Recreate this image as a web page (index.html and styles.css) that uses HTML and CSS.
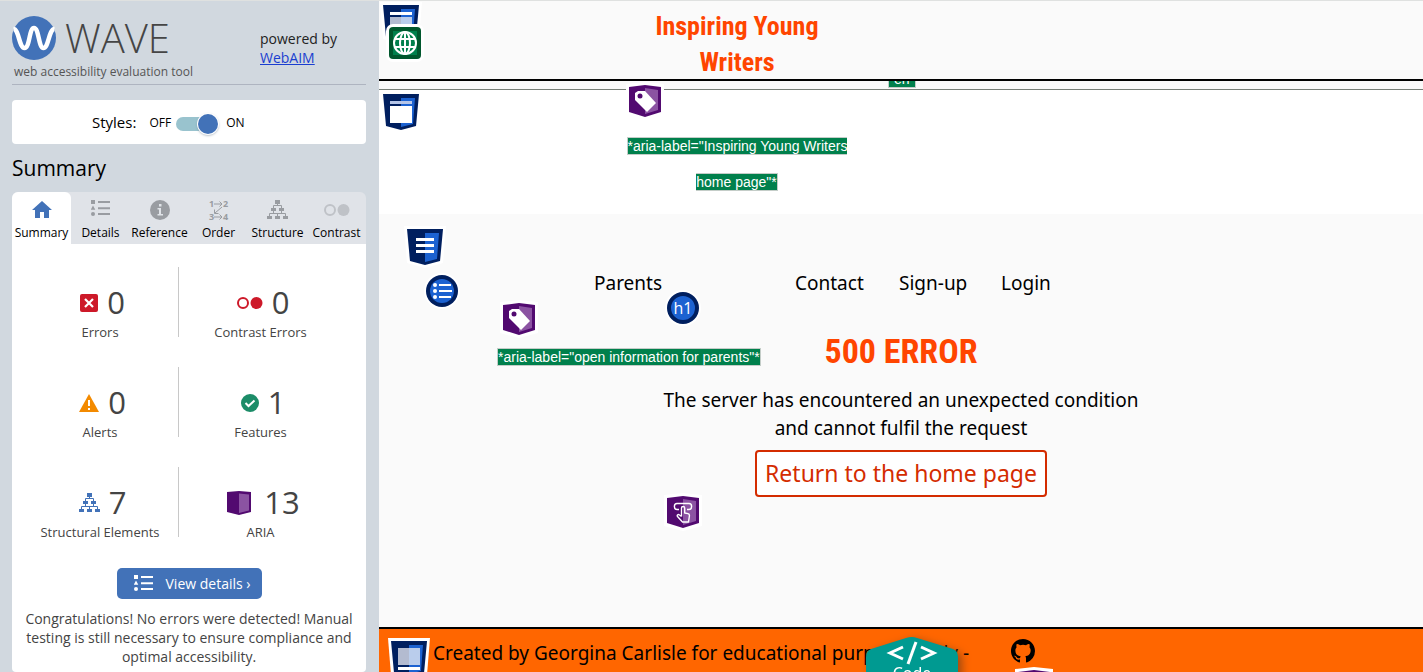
FILE: index.html
```html
<!DOCTYPE html>
<html lang="en">
<head>
<meta charset="utf-8">
<title>500 Error - Inspiring Young Writers</title>
<link rel="stylesheet" href="styles.css">
</head>
<body>
<svg class="defs" aria-hidden="true">
  <symbol id="list" viewBox="0 0 19 17"><path d="M0 0h4v4H0zM2 5.5l2.3 4.2H-.3zM7 1h12v2H7zM7 7.3h12v2H7zM7 13h12v2H7z"/><circle cx="2" cy="14" r="2"/></symbol>
  <symbol id="tree" viewBox="0 0 21 19"><path d="M8 0h5v4H8zM4 8h5v3H4zM12 8h5v3h-5zM0 16h5v3H0zM8 16h5v3H8zM16 16h5v3h-5z"/><path d="M10.500 3v3M6.500 8V5.500h8V8M6.500 11v2.500M14.500 11v2.500M2.500 16v-2.500h16V16M10.500 13v3" fill="none" stroke="currentColor"/></symbol>
  <symbol id="circles" viewBox="0 0 26 12"><circle cx="6" cy="6" r="5" fill="none" stroke="currentColor" stroke-width="2"/><circle cx="19.500" cy="6" r="6"/></symbol>
  <symbol id="shield" viewBox="0 0 42 42"><path fill="#fff" d="M0 0h42l-3 37-18 5-18-5z"/><path fill="#001f5f" d="M3 3h36l-3 32-15 4-15-4z"/><path fill="#1c62d1" d="M21 7h14l-2 26-12 3z"/></symbol>
  <symbol id="cube" viewBox="0 0 38 38"><path fill="#fff" d="M0 2l19-2 19 2v31l-19 5-19-5z"/><path fill="#520a70" d="M3 5l16-2 16 2v25l-16 5-16-5z"/><path fill="#8b53a2" d="M19 6l13 2v20l-13 4z"/></symbol>
</svg>
<div class="app">
  <aside class="sidebar">
    <header class="brand">
      <div class="brand-main">
        <div class="logo">
          <svg width="44" height="44" viewBox="0 0 44 44" aria-hidden="true"><circle cx="22" cy="22" r="22" fill="#4272b8"/><path d="M1.500 13C7 13 7 32 12.500 32S17 12 22 12s4.500 20 9.500 20S37 13 42.500 13" fill="none" stroke="#fff" stroke-width="4.500"/></svg>
          <span class="logo-text">WAVE</span>
        </div>
        <p class="tagline">web accessibility evaluation tool</p>
      </div>
      <p class="powered">powered by<br><a href="#webaim">WebAIM</a></p>
    </header>
    <div class="styles-box">
      <span class="styles-label" id="styles-label">Styles:</span>
      <span>OFF</span><input class="switch" type="checkbox" checked aria-labelledby="styles-label"><span>ON</span>
    </div>
    <h2 class="side-title">Summary</h2>
    <div class="tabs" role="tablist">
      <button class="tab active" role="tab" aria-selected="true"><svg width="20" height="20" viewBox="0 0 20 20"><path d="M10 1l10 9h-3v8h-5v-6H8v6H3v-8H0z"/></svg>Summary</button>
      <button class="tab" role="tab"><svg width="19" height="20"><use href="#list" width="19" height="17"/></svg>Details</button>
      <button class="tab" role="tab"><svg width="20" height="20" viewBox="0 0 20 20"><circle cx="10" cy="10" r="10"/><path fill="#e0e3e8" d="M9 4h2.500v2.500H9zM7.500 8H11v6h2v1.500H7.500V14H9V9.500H7.500z"/></svg>Reference</button>
      <button class="tab" role="tab"><svg class="order" width="20" height="20" viewBox="0 0 20 20"><g class="order-text"><text x="0" y="7">1</text><text x="14" y="7">2</text><text x="0" y="20">3</text><text x="14" y="20">4</text></g><path d="M5 4h8M10.500 1.500L13 4l-2.500 2.500M5 17h8M10.500 14.500L13 17l-2.500 2.500M13 7l-7 6M5.500 9.500L5.500 13.500H9.500" fill="none" stroke="currentColor"/></svg>Order</button>
      <button class="tab" role="tab"><svg width="21" height="20"><use href="#tree" width="21" height="19"/></svg>Structure</button>
      <button class="tab pale" role="tab"><svg width="26" height="20"><use href="#circles" y="4" width="26" height="12"/></svg>Contrast</button>
    </div>
    <section class="panel">
      <ul class="stats">
        <li><div class="count"><svg width="18" height="18" viewBox="0 0 18 18"><rect width="18" height="18" rx="2" fill="#cd1929"/><path d="M5 5l8 8M13 5l-8 8" stroke="#fff" stroke-width="2.200"/></svg>0</div>Errors</li>
        <li><div class="count red"><svg width="26" height="12"><use href="#circles"/></svg><span>0</span></div>Contrast Errors</li>
        <li><div class="count"><svg width="20" height="18" viewBox="0 0 20 18"><path fill="#f38a00" d="M10 0l10 18H0z"/><path fill="#fff" d="M9 6h2v6H9zM9 14h2v2H9z"/></svg>0</div>Alerts</li>
        <li><div class="count"><svg width="18" height="18" viewBox="0 0 18 18"><circle cx="9" cy="9" r="9" fill="#1c8c68"/><path d="M4.500 9l3 3 6-5.500" fill="none" stroke="#fff" stroke-width="2"/></svg>1</div>Features</li>
        <li><div class="count blue"><svg width="21" height="19"><use href="#tree"/></svg><span>7</span></div>Structural Elements</li>
        <li><div class="count wide"><svg width="26" height="24" viewBox="0 0 26 24"><path fill="#520a70" d="M1 1l12-1 12 1v20l-12 3-12-3z"/><path fill="#8b53a2" d="M13 2.500l10 1v16L13 22z"/></svg>13</div>ARIA</li>
      </ul>
      <button class="details"><svg width="19" height="17"><use href="#list"/></svg>View details ›</button>
      <p class="message">Congratulations! No errors were detected! Manual testing is still necessary to ensure compliance and optimal accessibility.</p>
    </section>
  </aside>

  <div class="page">
    <header class="site-header"><a class="site-title" href="#home">Inspiring Young Writers</a></header>
    <div class="strip"><span class="note note-lang">en</span></div>
    <div class="home-label"><p><span class="note">*aria-label="Inspiring Young Writers home page"*</span></p></div>
    <main class="content">
      <nav class="nav"><a href="#parents">Parents</a><a href="#contact">Contact</a><a href="#signup">Sign-up</a><a href="#login">Login</a></nav>
      <h1>500 ERROR</h1>
      <p class="lead">The server has encountered an unexpected condition<br>and cannot fulfil the request</p>
      <a class="return" href="#home">Return to the home page</a>
    </main>
    <footer class="site-footer">
      <span>Created by Georgina Carlisle for educational purposes only -</span>
      <a href="#github" aria-label="GitHub"><svg width="24" height="24" viewBox="0 0 16 16"><path d="M8 0C3.580 0 0 3.580 0 8c0 3.540 2.290 6.530 5.470 7.590.4.070.55-.17.55-.38 0-.19-.01-.82-.01-1.490-2.010.37-2.530-.49-2.690-.94-.09-.23-.48-.94-.82-1.130-.28-.15-.68-.52-.01-.53.63-.01 1.080.58 1.230.82.72 1.210 1.870.87 2.330.66.070-.52.28-.87.51-1.070-1.780-.2-3.640-.89-3.640-3.950 0-.87.310-1.590.82-2.150-.08-.2-.36-1.020.08-2.120 0 0 .67-.21 2.200.82a7.600 7.600 0 014 0c1.530-1.040 2.200-.82 2.200-.82.44 1.100.16 1.920.08 2.120.51.56.82 1.270.82 2.150 0 3.070-1.870 3.750-3.650 3.950.29.25.54.73.54 1.480 0 1.070-.01 1.930-.01 2.200 0 .21.150.46.55.38A8.010 8.010 0 0016 8c0-4.420-3.580-8-8-8z"/></svg></a>
    </footer>

    <svg class="mark m-header" width="42" height="42" viewBox="0 0 42 42"><use href="#shield"/><path fill="#b3bbd0" d="M10 15h11v14H10z"/><path fill="#bacdec" d="M21 15h11v14H21z"/><path fill="#fff" d="M10 10h22v3H10z"/></svg>
    <svg class="mark m-lang" width="38" height="38" viewBox="0 0 38 38"><rect width="38" height="38" rx="7" fill="#fff"/><rect x="3" y="3" width="32" height="32" rx="4" fill="#00572d"/><rect x="7" y="7" width="24" height="24" fill="#00804c"/><g fill="none" stroke="#fff" stroke-width="2"><circle cx="19" cy="19" r="11"/><ellipse cx="19" cy="19" rx="5" ry="11"/><path d="M19 8v22M8.500 15h21M8.500 23h21"/></g></svg>
    <svg class="mark m-region" width="42" height="42" viewBox="0 0 42 42"><use href="#shield"/><path fill="#fff" d="M10 15h22v17H10z"/><path fill="#b5c5e8" d="M10 10h22v3H10z"/></svg>
    <svg class="mark m-tag" width="38" height="38"><use href="#cube"/><path fill="#fff" d="M9 11l3-2h7l11 12-9 9L9 18z"/><circle cx="14" cy="14" r="2.500" fill="#520a70"/></svg>
    <svg class="mark m-nav" width="42" height="42"><use href="#shield"/><path fill="#fff" d="M12 12h18v3H12zM12 18h18v3H12zM12 24h18v3H12z"/></svg>
    <svg class="mark m-list" width="36" height="36" viewBox="0 0 36 36"><circle cx="18" cy="18" r="18" fill="#fff"/><circle cx="18" cy="18" r="16" fill="#001f5f"/><circle cx="18" cy="18" r="12" fill="#1c62d1"/><path fill="#fff" d="M15 11h12v2H15zM15 17h13v2H15zM15 23h12v2H15z"/><g fill="#fff"><circle cx="11" cy="12" r="2"/><circle cx="11" cy="18" r="2"/><circle cx="11" cy="24" r="2"/></g></svg>
    <svg class="mark m-tag2" width="38" height="38"><use href="#cube"/><path fill="#fff" d="M9 11l3-2h7l11 12-9 9L9 18z"/><circle cx="14" cy="14" r="2.500" fill="#520a70"/></svg>
    <span class="mark m-h1">h1</span>
    <span class="note mark m-parents">*aria-label="open information for parents"*</span>
    <svg class="mark m-press" width="38" height="38"><use href="#cube"/><path d="M15 16.500h-2c-3.500 0-3.500-6 0-6h12c3.500 0 3.500 6 0 6h-2M17.500 23.500V15c0-2 3.200-2 3.200 0v5l3.300.6c1.300.3 1.600 1 1.400 2.400L24.500 29h-6l-5-5.500c-1-1.500.8-2.500 2-1.500l2 1.500" fill="none" stroke="#fff" stroke-width="1.400" stroke-linejoin="round"/></svg>
    <svg class="mark m-footer" width="42" height="42" viewBox="0 0 42 42"><use href="#shield"/><path fill="#b3bbd0" d="M10 10h11v17H10z"/><path fill="#bacdec" d="M21 10h11v17H21z"/><path fill="#fff" d="M10 29h22v3H10z"/></svg>
    <svg class="mark m-cube" width="38" height="38"><use href="#cube"/></svg>
    <div class="mark m-code"><svg width="92" height="60" viewBox="0 0 92 60"><path fill="#009a91" d="M40 1q6-2 11 0l36 11q5 2 5 8v40H0V20q0-6 5-8z"/><path d="M37 10L24 16l13 6M55 10l13 6-13 6" fill="none" stroke="#fff" stroke-width="3"/><path d="M50 5l-8 22" stroke="#fff" stroke-width="3"/></svg><span>Code</span></div>
  </div>
</div>
</body>
</html>
```
FILE: styles.css
```css
* { box-sizing: border-box; }
body { margin: 0; font-family: "Open Sans", sans-serif; color: #000; background: #fafafa; }
p, h1, h2, ul { margin: 0; padding: 0; }
button { font: inherit; border: 0; cursor: pointer; }
svg { flex: none; fill: currentColor; }
.defs { position: absolute; width: 0; height: 0; }

.app { display: flex; height: 100vh; overflow: hidden; border-top: 1px solid #dfe1e0; }

.sidebar { width: 379px; flex: none; display: flex; flex-direction: column; padding: 15px 13px 0 12px; background: #d1d8df; }
.brand { display: flex; justify-content: space-between; height: 70px; border-bottom: 1px solid #aeb4c0; }
.logo { display: flex; align-items: center; gap: 9px; height: 44px; }
.logo-text { font-size: 40px; font-weight: 300; line-height: 44px; color: #454545; }
.tagline { padding: 4px 2px 0; font-size: 12px; line-height: 16px; color: #555; }
.powered { width: 106px; padding-top: 13px; font-size: 14px; line-height: 19px; color: #222; }
.powered a { color: #1a3ed0; }

.styles-box { display: flex; align-items: center; height: 44px; margin-top: 15px; padding-left: 80px; font-size: 12px; background: #fff; border-radius: 4px; }
.styles-label { margin-right: 13px; font-size: 15px; }
.switch { appearance: none; position: relative; width: 42px; height: 14px; margin: 4px 8px 0 5px; border-radius: 7px; background: #99c3ce; }
.switch::before { content: ""; position: absolute; right: 0; top: -3px; width: 20px; height: 20px; border-radius: 50%; background: #4272b8; box-shadow: 0 0 0 1px #fff, 0 1px 3px #667788; }
.side-title { padding: 9px 0; font-size: 21px; font-weight: 400; line-height: 30px; }

.tabs { display: grid; grid-template-columns: repeat(6, 1fr); flex: none; height: 52px; background: #e0e3e8; border-radius: 6px 6px 0 0; }
.tab { display: flex; flex-direction: column; align-items: center; gap: 4px; min-width: 0; padding: 8px 0 0; font-size: 12px; line-height: 18px; color: #000; background: none; border-radius: 6px 6px 0 0; }
.tab svg { color: #999ca1; }
.tab.active { background: #fff; }
.tab.active svg { color: #4272b8; }
.tab.pale svg { color: #bfc2c7; }
.order { overflow: visible; }
.order-text { font-size: 9px; font-weight: 700; }

.panel { flex: none; padding: 23px 8px 6px; text-align: center; color: #444; background: #fff; border-radius: 0 0 4px 4px; }
.stats { display: grid; grid-template-columns: 159px 161px; row-gap: 30px; list-style: none; font-size: 13px; line-height: 18px; }
.stats li { height: 70px; padding: 17px 0 0 2px; }
.stats li:nth-child(odd) { border-right: 1px solid #c8c8c8; }
.count { display: flex; align-items: center; justify-content: center; gap: 9px; padding-left: 5px; margin-bottom: 2px; font-size: 31px; line-height: 37px; }
.wide { gap: 12px; }
.red svg { color: #cd1929; }
.blue svg { color: #4272b8; }
.details { display: flex; align-items: center; gap: 13px; width: 145px; height: 31px; margin: 31px auto 10px; padding: 0 17px; font-size: 14px; white-space: nowrap; color: #fff; background: #4272b8; border-radius: 5px; }
.message { font-size: 14px; line-height: 19px; }

.page { position: relative; flex: 1; display: flex; flex-direction: column; font-family: "Noto Sans", sans-serif; font-size: 19px; background: #fafafa; }
.page a { color: inherit; text-decoration: none; }
.site-header { height: 80px; padding: 7px 0 0 248px; border-bottom: 2px solid #000; }
.page .site-title { display: block; width: 220px; text-align: center; color: #ff4500; }
.site-title, h1 { font-family: "Liberation Sans Narrow", "Roboto Condensed", sans-serif; font-weight: 700; font-size: 26px; line-height: 36px; }
.strip { position: relative; height: 9px; overflow: hidden; border-bottom: 1px solid #777f77; }
.note { font-family: "Liberation Sans", sans-serif; font-size: 14px; color: #fff; background: #00804c; border: 1px solid #c4cdc8; white-space: nowrap; }
.note-lang { position: absolute; left: 509px; bottom: 1px; padding: 0 5px; line-height: 16px; }
.home-label { height: 124px; padding: 38px 0 0 247px; font-family: "Liberation Sans", sans-serif; font-size: 14px; text-align: center; background: #fff; }
.home-label p { width: 222px; line-height: 36px; }
.home-label .note { white-space: normal; }
.content { display: flex; flex-direction: column; align-items: center; height: 413px; padding-top: 55px; }
.nav { display: grid; grid-template-columns: 201px 104px 102px auto; align-self: flex-start; padding-left: 215px; line-height: 28px; }
h1 { margin-top: 34px; font-size: 34px; line-height: 40px; color: #ff4500; }
.lead { margin-top: 15px; text-align: center; line-height: 28px; }
.page .return { margin-top: 8px; padding: 0 8px; font-size: 23px; line-height: 43px; color: #d42c00; background: #fff; border: 2px solid #d42c00; border-radius: 4px; }
.site-footer { display: flex; flex: 1; gap: 42px; padding: 10px 0 0 54px; line-height: 28px; background: #ff6600; border-top: 2px solid #000; }

.mark { position: absolute; }
.m-header { left: 1px; top: 1px; }
.m-lang { left: 7px; top: 23px; }
.m-region { left: 1px; top: 90px; }
.m-tag { left: 247px; top: 81px; }
.m-nav { left: 25px; top: 225px; }
.m-list { left: 45px; top: 272px; }
.m-tag2 { left: 121px; top: 299px; }
.m-h1 { left: 288px; top: 291px; width: 32px; height: 32px; border: 4px solid #001f5f; border-radius: 50%; background: #1c62d1; color: #fff; font-family: "Open Sans", sans-serif; font-size: 16px; line-height: 24px; text-align: center; box-shadow: 0 0 0 2px #fff; }
.m-parents { left: 118px; top: 347px; line-height: 16px; }
.m-press { left: 285px; top: 492px; }
.m-footer { left: 9px; top: 637px; }
.m-cube { left: 636px; top: 666px; }
.m-code { left: 487px; top: 636px; width: 92px; height: 60px; color: #fff; text-align: center; filter: drop-shadow(4px 3px 4px #a04a10); }
.m-code span { position: absolute; left: 0; right: 0; top: 26px; font-size: 16px; line-height: 20px; }
```
